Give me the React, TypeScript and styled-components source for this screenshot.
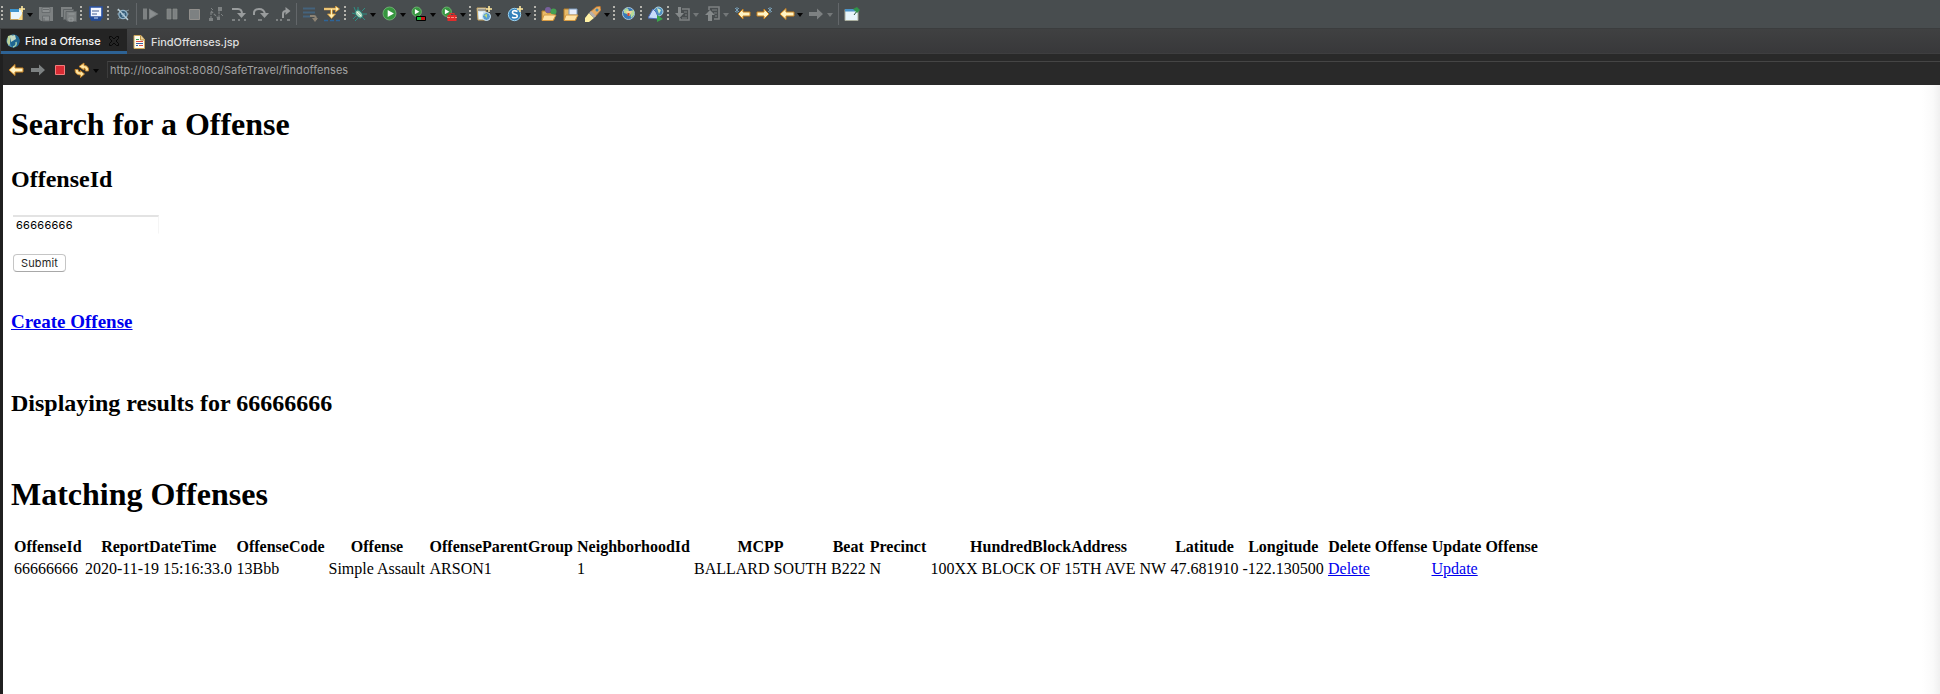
import React from 'react';
import styled, { createGlobalStyle } from 'styled-components';

const GlobalStyle = createGlobalStyle`
  body { margin: 0; background: #fff; overflow: hidden; }
  * { box-sizing: border-box; }
`;

const ui = `Inter, "Liberation Sans", sans-serif`;

const Window = styled.div`
  height: 694px;
  display: flex;
  flex-direction: column;
  background: #292929;
`;
const Toolbar = styled.div`
  height: 28px;
  flex: none;
  display: flex;
  align-items: center;
  padding-left: 1px;
  background: #484d4f;
`;
const Slot = styled.div<{ $w: number }>`
  width: ${p => p.$w}px;
  height: 28px;
  flex: none;
  display: flex;
  align-items: center;
  svg { display: block; flex: none; }
`;
const Grip = styled.i`
  width: 2px;
  height: 16px;
  background: repeating-linear-gradient(#b5b4ae 0 2px, #484d4f 2px 4px);
`;
const Divider = styled.i`
  width: 1px;
  height: 22px;
  background: #63676a;
`;
const Arrow = styled.i<{ $off?: boolean }>`
  margin: 2px 0 0 1px;
  border: solid transparent;
  border-width: 4px 3px 0;
  border-top-color: ${p => (p.$off ? '#747879' : '#060606')};
`;

const Tabs = styled.div`
  height: 26px;
  flex: none;
  display: flex;
  padding-left: 1px;
  background: linear-gradient(#404142, #38383a 24px, #444445 25px);
  border-top: 1px solid #3b3d3e;
`;
const Tab = styled.div<{ $active?: boolean }>`
  height: 25px;
  display: flex;
  align-items: center;
  width: ${p => (p.$active ? 126 : 130)}px;
  padding: ${p => (p.$active ? '2px 0 0 4px' : '0 0 0 4px')};
  background: ${p => (p.$active ? '#242424' : 'transparent')};
  border-bottom: ${p => (p.$active ? '3px solid #2d6294' : '0')};
  color: ${p => (p.$active ? '#f4f4f4' : '#dedede')};
  font: 500 11px/14px ${ui};
  white-space: nowrap;
`;
const TabLabel = styled.span<{ $w: number; $track: number }>`
  width: ${p => p.$w}px;
  margin-left: 4px;
  letter-spacing: ${p => p.$track}px;
`;
const AddressBar = styled.div`
  height: 31px;
  flex: none;
  display: flex;
  padding: 7px 0 0 5px;
  background: #292929;
  border-left: 3px solid #202020;
`;
const Nav = styled.div`
  display: flex;
  align-items: center;
  width: 99px;
  height: 18px;
`;
const Url = styled.div`
  flex: 1;
  height: 17px;
  border-top: 1px solid #454545;
  border-left: 1px solid #3c3c3c;
  padding: 1px 0 0 2px;
  color: #a2a2a2;
  font: 400 11px/14px ${ui};
  letter-spacing: 0.05px;
`;

const Page = styled.main`
  flex: 1;
  border-left: 3px solid #202020;
  padding: 21px 8px 0;
  background: linear-gradient(to left, #f0f0f0, #fafafa 7px, #fff 18px) #fff;
  color: #000;
  font: 16px/18px "Liberation Serif", "Times New Roman", serif;
`;
const Title = styled.h1<{ $top?: number }>`
  margin: ${p => p.$top ?? 0}px 0 0;
  font-size: 32px;
  line-height: 37px;
`;
const Heading = styled.h2<{ $top: number }>`
  margin: ${p => p.$top}px 0 0;
  font-size: 24px;
  line-height: 28px;
`;
const Form = styled.form`
  display: flex;
  flex-direction: column;
  align-items: flex-start;
  margin: 22px 0 0 2px;
`;
const Field = styled.input`
  width: 146px;
  height: 19px;
  padding: 0 0 0 3px;
  border: 1px solid #f5f5f5;
  border-top: 2px solid #e3e3e3;
  border-bottom-color: #fff;
  border-left-width: 0;
  outline: 0;
  color: #000;
  font: 11px/14px ${ui};
  letter-spacing: 0.28px;
`;
const Submit = styled.button`
  width: 53px;
  height: 18px;
  margin-top: 20px;
  padding: 0;
  border: 1px solid #c5c5c5;
  border-bottom-color: #a8a8a8;
  border-radius: 4px;
  background: #fff;
  color: #262626;
  font: 11px/15px ${ui};
  letter-spacing: 0.1px;
`;
const Create = styled.h3`
  margin: 39px 0 0;
  font-size: 19px;
  line-height: 21px;
`;
const Link = styled.a`
  color: #0000ee;
  text-decoration: underline;
`;
const Results = styled.table`
  margin-top: 22px;
  width: 1530px;
  table-layout: fixed;
  border-spacing: 2px;
  white-space: nowrap;
  th, td { padding: 1px; height: 20px; }
  td { text-align: left; }
`;
const Col = styled.col<{ $w: number }>`
  width: ${p => p.$w}px;
`;

const Svg = ({ children }: { children: React.ReactNode }) => (
  <svg width="16" height="16" viewBox="0 0 16 16" fill="none">{children}</svg>
);
const grey = '#7d8182';
const left = 'M1 8 7 2.5V6h8v4H7v3.5Z';
const right = 'M15 8 9 2.5V6H1v4h8v3.5Z';
const gold = { fill: '#fff3c4', stroke: '#c9811c' };
const Spark = () => <path d="M13 0v6M10 3h6" stroke="#ffe9a0" strokeWidth="1.6" />;
const Play = ({ r }: { r: number }) => (
  <>
    <circle cx={r + 1} cy={r + 1} r={r} fill="#36963f" stroke="#76b878" strokeWidth=".8" />
    <path d={`M${r - 0.8} ${r * 0.45 + 1}v${r * 1.1}l${r * 0.95}-${r * 0.55}Z`} fill="#fff" />
  </>
);

const icons: Record<string, React.ReactNode> = {
  new: <><path d="M1.5 3.5h12v10h-12Z" fill="#e8f5fc" stroke="#c2a05c" /><path d="M1 3h9v3H1Z" fill="#3d93cc" /><path d="M9 14h4V8Z" fill="#f6d98a" /><Spark /></>,
  save: <><path d="M1 1h14v14H3l-2-2Z" fill={grey} /><path d="M4 1.5h8v5H4ZM4.5 10h7v5h-7Z" fill="#8b8f90" stroke="#686c6e" /><path d="M5 3.5h6M6 12v3" stroke="#686c6e" /></>,
  saveAll: <><path d="M0 1h11v10H0Z" fill={grey} /><path d="M2.5 3.5h10v10h-10Z" fill={grey} stroke="#606567" /><path d="M5 5.5h10.5v10H7L5 14Z" fill={grey} stroke="#606567" /><path d="M7.5 8h6M8 12h4v3H8Z" stroke="#979b9c" /></>,
  monitor: <><path d="M2 1h12v10H2Z" fill="#f4f7ff" stroke="#2851a4" strokeWidth="1.6" /><path d="M4 5h7M4 8h5" stroke="#405c93" /><path d="M2 12.5h12M3 14h10" stroke="#214b9a" strokeWidth="1.5" /><path d="M6 12h4" stroke="#c3d7f4" /></>,
  skip: <><path d="m2 4 3 1m9-1-3 1M2 8h2m8 0h2M3 13l3-2m7 2-3-2" stroke="#8c9da3" strokeWidth=".8" /><circle cx="8" cy="8.5" r="4.2" fill="#365d79" stroke="#93b3c7" strokeWidth="1.2" /><path d="m3 3 10 11" stroke="#b7cbd4" strokeWidth="1.3" /><path d="M6 8h4M7 10h3" stroke="#a8c7dc" /></>,
  resume: <><path d="M0 2.5h4v11H0ZM6 2.5v11L15.5 8Z" fill={grey} /><path d="m7 4 6 4-6 4Z" fill="#8b8f90" /></>,
  pause: <path d="M2 3h4v10H2ZM8 3h4v10H8Z" fill={grey} stroke="#8b8c8b" strokeWidth=".7" />,
  stop: <path d="M1.5 3.5h10v10h-10Z" fill={grey} stroke="#92908d" />,
  disconnect: <><path d="M3 13V5l8 8V4" stroke={grey} strokeWidth="1.2" strokeDasharray="3 1" /><path d="M1 12h4v3H1ZM10 1h4v4h-4ZM9 11h3v3H9Z" fill={grey} /><path d="m3 2 2 2m8 4 2 2" stroke={grey} /></>,
  into: <><path d="M1 3h6q4 0 4 5" stroke="#999c9d" strokeWidth="2" /><path d="M6 7h9l-4.5 5Z" fill="#999c9d" /><path d="M1 14h3m3 0h2m4 0h2" stroke={grey} strokeWidth="2" /></>,
  over: <><path d="M1 9V7q0-4 5-4t6 5" stroke="#999c9d" strokeWidth="2" /><path d="M7 7h9l-4.5 5Z" fill="#999c9d" /><path d="M5 14h4" stroke={grey} strokeWidth="2" /></>,
  ret: <><path d="M8 12V8q0-3 3-3h1" stroke="#999c9d" strokeWidth="2" /><path d="m10.5 1 5 4-5 4Z" fill="#999c9d" /><path d="M1 14h2m2 0h2m5 0h3" stroke={grey} strokeWidth="2" /></>,
  lines: <><path d="M1 2.5h12M1 6.5h12M1 10.5h7" stroke="#44637c" strokeWidth="2" /><path d="M8 10h4q2 0 2 4" stroke="#8d8374" strokeWidth="2" /><path d="m10 12 3 4 3-4Z" fill="#8d8374" /></>,
  dropFrame: <><path d="M0 3h12M7.5 3v7" stroke="#d99934" strokeWidth="2.5" /><path d="m11.5 0 4 3-4 3ZM3.5 8h8l-4 4.5Z" fill="#fff0b5" stroke="#d99934" strokeWidth=".8" /><path d="M0 3h12M7.5 3v7" stroke="#fff0b5" /><path d="M0 14.5h4m2 0h4m2 0h4" stroke="#2e6599" strokeWidth="1.5" /></>,
  bug: <><path d="m3 1 2 5M1 7l3 1m-2 5 3-3m-1 5 3-3m0-8V1m4 4 3-3m-2 6h4m-5 3 3 3" stroke="#2d9085" /><ellipse cx="8" cy="8" rx="3" ry="4.5" transform="rotate(-40 8 8)" fill="#a6d6ba" stroke="#297b74" /><path d="m6 6 4 4" stroke="#f1fff2" /></>,
  run: <Play r={6.5} />,
  coverage: <><Play r={4.7} /><path d="M5.5 10.5h9v4h-9Z" fill="#11bf36" stroke="#000" /><path d="M10 11h4v3h-4Z" fill="#c61518" /></>,
  external: <><Play r={4.7} /><path d="M9 9V7.500h4V9" stroke="#d92e2e" strokeWidth="1.2" /><path d="M6.5 9h9v6h-9Z" fill="#e12c2b" /><path d="M6 11.5h10" stroke="#ff9182" strokeDasharray="3 1" /></>,
  server: <><path d="M1 2h9v12H2Z" fill="#d4e4ef" stroke="#c9a35b" /><path d="M2 4h9" stroke="#665536" /><path d="M3 6h4v7H3Z" fill="#eff8fb" /><circle cx="10.5" cy="10.5" r="4" fill="#5a9dd0" stroke="#d7edf9" /><path d="m8 9 3-1v4Z" fill="#bddd75" /><Spark /></>,
  servlet: <><circle cx="7.5" cy="8.5" r="6.2" fill="#3482bb" stroke="#9ad0ee" /><path d="M10.5 5.5q-5-2-5 .8 0 1.5 2.5 2 3 .7 2 2.7-1.5 1.5-5 .2" stroke="#fff" strokeWidth="1.6" /><Spark /></>,
  folderType: <><path d="M1 5h4l1 2h7v7H1Z" fill="#e8ba69" stroke="#b7802b" /><circle cx="7" cy="4" r="3" fill="#77609c" /><circle cx="12.5" cy="5.5" r="3" fill="#45a052" /><path d="M3 9h12l-3 5.5H1Z" fill="#ffe3a6" stroke="#d69a42" /></>,
  folder: <><path d="M1 3h5l1 3h6v8H1Z" fill="#e8ba69" stroke="#b7802b" /><path d="M6 3h8v6H6Z" fill="#e9effb" stroke="#7c9cc1" /><path d="M3 9h12l-3 5.5H1Z" fill="#ffe3a6" stroke="#d69a42" /></>,
  rocket: <><path d="M0 16v-4l4-5 5 5-5 4Z" fill="#fff1a5" /><path d="m5 6 6-5 4-1 1 4-6 7Z" fill="#e6ad65" stroke="#b8702a" strokeWidth=".8" /><path d="m4 7 2-2 5 5-2 2Z" fill="#b5b0ac" /><circle cx="12" cy="4" r="1.5" fill="#4186ad" /></>,
  globe: <><circle cx="7.5" cy="7.5" r="6" fill="#3979b9" stroke="#a9c6dc" /><path d="m3 4 3-2 2 2-2 4-3-1Zm6 1 4-1v5l-3 3Z" fill="#b6dd9a" /><path d="m5 5 3 5 3-5" fill="#f4d4a2" stroke="#ead49a" /><path d="M7.5 7v3" stroke="#d94a32" strokeWidth="2" /></>,
  webDebug: <><circle cx="10.5" cy="5.5" r="4.5" fill="#5092c1" stroke="#b2d6e5" /><path d="m0 12 5-9 3 3 3 7Z" fill="#c7dcfa" stroke="#4e6fbb" /><path d="m9 2 4 2-2 4Z" fill="#d8edc2" /><path d="m9 9 6 4-6 3Z" fill="#39a64c" /></>,
  nextNote: <><path d="M7 3h7v11H5v-2" stroke={grey} strokeWidth="1.6" /><path d="M9 6h3M10 9h2m-5 3h5" stroke={grey} /><path d="M3 1h3v6h3l-4.5 5L0 7h3Z" fill="#85898a" /></>,
  prevNote: <><path d="M4 4V1h10v12H9" stroke={grey} strokeWidth="1.6" /><path d="M7 4h5M9 7h3m-2 3h2" stroke={grey} /><path d="m5 4 5 5H7v6H3V9H0Z" fill="#85898a" /></>,
  backEdit: <><path d="M3 8 8 3v3h7v4H8v3Z" {...gold} /><path d="M2 1v6M0 2l4 4m0-4L0 6" stroke="#779db4" /></>,
  forwardEdit: <><path d="M13 8 8 3v3H1v4h7v3Z" {...gold} /><path d="M14 1v6m-2-5 4 4m0-4-4 4" stroke="#779db4" /></>,
  back: <path d={left} {...gold} />,
  forward: <path d={right} fill={grey} />,
  pin: <><path d="M1 3.5h13v11H1Z" fill="#e7f5fb" stroke="#aaafa0" /><path d="M1 3h10v2.5H1Z" fill="#4b93c8" /><path d="m10 9 3-4" stroke="#294f37" /><path d="m9 3 4-2 3 3-3 3Z" fill="#30924a" /></>,
  red: <path d="M3.5 3.5h9v9h-9Z" fill="#d82b33" stroke="#f27c7c" />,
  refresh: <><path d="M5 4.500 10 1v2.500q5 0 4.500 5.500h-3q0-3-1.500-3v2ZM10.500 12 6.500 15.500V13Q1 13 1 7.500h3q0 2.500 2.500 2.500V8.500Z" fill="#ffe4a0" stroke="#c88426" strokeWidth=".9" /></>,
  world: <><circle cx="8" cy="8" r="6.5" fill="#438bb7" /><path d="m3 3 4-1 2 4-3 2-2 5-2-4Z" fill="#bed498" /><path d="M8 1.5q6.5 0 6.5 6.5T8 14.5Q5 12 5 8t3-6.5" fill="#1e6590" /><path d="m5 3 5-1 1 4-5 3Z" fill="#c4dac4" /><path d="M8 14q4-1 3-5" stroke="#a3cfae" strokeWidth="1.5" /></>,
  jsp: <><path d="M3 1.5h7l3.500 4v9H3Z" fill="#fffdf0" stroke="#cda75a" /><path d="M9.5 1.5V6h4" fill="#ead29a" stroke="#bd9142" /><path d="M5 5.5h3" stroke="#37a15c" /><path d="M5 7.5h7M8 11.5h4" stroke="#df4c43" /><path d="M5 9.5h7M5 11.5h2" stroke="#3761a6" /></>,
};

/* Toolbar contents with the x offset at which each one starts. */
const tools: [string, number][] = [
  ['|:', 1], ['new', 8.5], ['v', 26], ['save', 38], ['saveAll', 60.5], ['|:', 80], ['monitor', 87.5], ['|:', 107],
  ['skip', 115], ['|', 136], ['resume', 143], ['pause', 165], ['stop', 188], ['disconnect', 208], ['into', 231],
  ['over', 253], ['ret', 275], ['|', 296], ['lines', 302], ['dropFrame', 324], ['|:', 344], ['bug', 351], ['v', 369],
  ['run', 381.5], ['v', 399], ['coverage', 411], ['v', 429], ['external', 441], ['v', 459], ['|:', 469],
  ['server', 476], ['v', 494], ['servlet', 506.5], ['v', 524], ['|:', 534], ['folderType', 541], ['folder', 563],
  ['rocket', 585], ['v', 603], ['|:', 613], ['globe', 621], ['|:', 640], ['webDebug', 647.5], ['|:', 667],
  ['nextNote', 675], ['vx', 692], ['prevNote', 705], ['vx', 722], ['backEdit', 734.5], ['forwardEdit', 756],
  ['back', 778.5], ['v', 796], ['forward', 808], ['vx', 826], ['|', 838], ['pin', 844], ['', 861],
];

const Tool = ({ kind }: { kind: string }) => {
  if (kind === '|:') return <Grip />;
  if (kind === '|') return <Divider />;
  if (kind === 'v' || kind === 'vx') return <Arrow $off={kind === 'vx'} />;
  return <Svg>{icons[kind]}</Svg>;
};

const columns: [string, number, React.ReactNode][] = [
  ['OffenseId', 69, '66666666'],
  ['ReportDateTime', 149.5, '2020-11-19 15:16:33.0'],
  ['OffenseCode', 90, '13Bbb'],
  ['Offense', 99, 'Simple Assault'],
  ['OffenseParentGroup', 145.5, 'ARSON1'],
  ['NeighborhoodId', 115, '1'],
  ['MCPP', 135, 'BALLARD SOUTH'],
  ['Beat', 36.5, 'B222'],
  ['Precinct', 59, 'N'],
  ['HundredBlockAddress', 238, '100XX BLOCK OF 15TH AVE NW'],
  ['Latitude', 70, '47.681910'],
  ['Longitude', 83.5, '-122.130500'],
  ['Delete Offense', 101.5, <Link href="#delete">Delete</Link>],
  ['Update Offense', 108.5, <Link href="#update">Update</Link>],
];

export default function App() {
  return (
    <Window>
      <GlobalStyle />
      <Toolbar>
        {tools.slice(0, -1).map(([kind, x], i) => (
          <Slot key={x} $w={tools[i + 1][1] - x}><Tool kind={kind} /></Slot>
        ))}
      </Toolbar>
      <Tabs>
        <Tab $active>
          <Svg>{icons.world}</Svg>
          <TabLabel $w={83} $track={-0.05}>Find a Offense</TabLabel>
          <svg width="12" height="12" viewBox="0 0 12 12" fill="none">
            <path d="M1.5 1.5h2L6 4l2.5-2.5h2v2L8 6l2.5 2.5v2h-2L6 8l-2.5 2.5h-2v-2L4 6 1.5 3.5Z" stroke="#080808" />
          </svg>
        </Tab>
        <Tab>
          <Svg>{icons.jsp}</Svg>
          <TabLabel $w={100} $track={-0.04}>FindOffenses.jsp</TabLabel>
        </Tab>
      </Tabs>
      <AddressBar>
        <Nav>
          <Slot $w={22}><Svg>{icons.back}</Svg></Slot>
          <Slot $w={22}><Svg>{icons.forward}</Svg></Slot>
          <Slot $w={22}><Svg>{icons.red}</Svg></Slot>
          <Slot $w={18}><Svg>{icons.refresh}</Svg></Slot>
          <Arrow />
        </Nav>
        <Url>http://localhost:8080/SafeTravel/findoffenses</Url>
      </AddressBar>
      <Page>
        <Title>Search for a Offense</Title>
        <Heading $top={22}>OffenseId</Heading>
        <Form onSubmit={e => e.preventDefault()}>
          <Field defaultValue="66666666" />
          <Submit>Submit</Submit>
        </Form>
        <Create><Link href="#create">Create Offense</Link></Create>
        <Heading $top={57}>Displaying results for 66666666</Heading>
        <Title $top={59}>Matching Offenses</Title>
        <Results>
          <colgroup>{columns.map(([name, w]) => <Col key={name} $w={w} />)}</colgroup>
          <thead><tr>{columns.map(([name]) => <th key={name}>{name}</th>)}</tr></thead>
          <tbody><tr>{columns.map(([name, , value]) => <td key={name}>{value}</td>)}</tr></tbody>
        </Results>
      </Page>
    </Window>
  );
}
